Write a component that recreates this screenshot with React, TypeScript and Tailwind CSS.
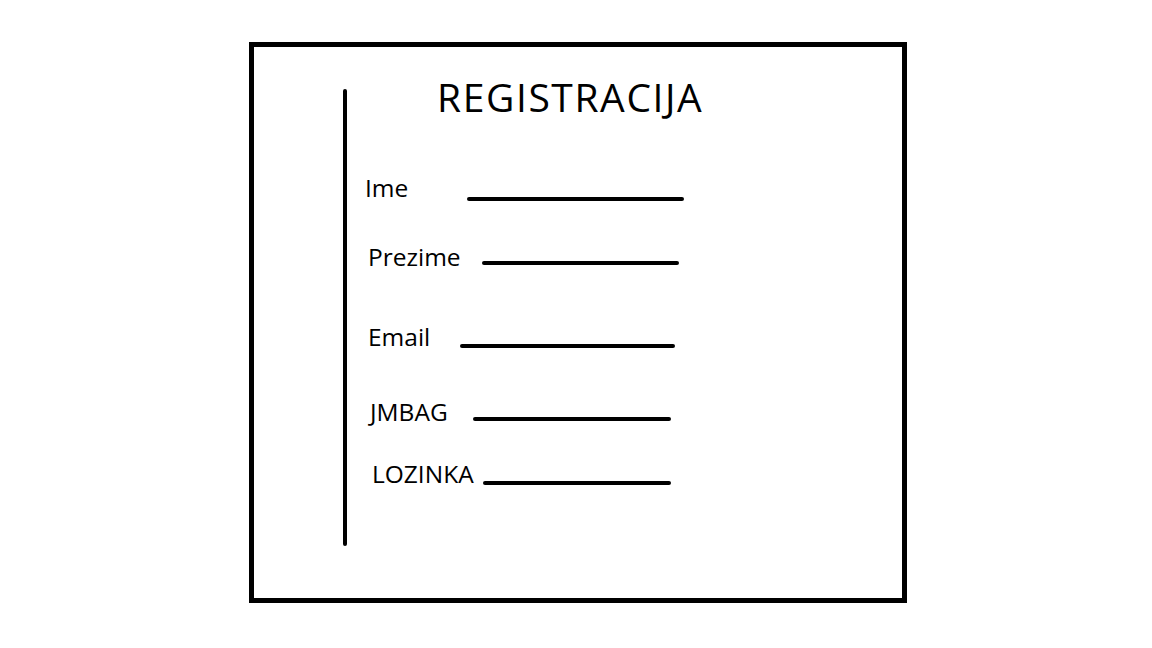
import React from 'react';

interface Field {
  label: string;
  // label box width, so the line starts where it was drawn
  labelWidth: string;
  rowClass: string;
  lineClass: string;
}

const fields: Field[] = [
  { label: 'Ime', labelWidth: 'w-[102px]', rowClass: 'mt-[60px] ml-0', lineClass: 'mt-[21px] w-[217px]' },
  { label: 'Prezime', labelWidth: 'w-[114px]', rowClass: 'mt-[44px] ml-[3px]', lineClass: 'mt-[16px] w-[197px]' },
  { label: 'Email', labelWidth: 'w-[92px]', rowClass: 'mt-[56px] ml-[3px]', lineClass: 'mt-[19px] w-[215px]' },
  { label: 'JMBAG', labelWidth: 'w-[103px]', rowClass: 'mt-[51px] ml-[5px]', lineClass: 'mt-[17px] w-[198px]' },
  { label: 'LOZINKA', labelWidth: 'w-[111px]', rowClass: 'mt-[38px] ml-[7px]', lineClass: 'mt-[19px] w-[188px]' },
];

export default function App() {
  return (
    <div className="w-[1152px] h-[648px] bg-white pl-[249px] pt-[42px] font-['Open_Sans',sans-serif] text-black">
      <div className="w-[658px] h-[561px] border-[5px] border-black pl-[89px] pt-[31px] flex">
        {/* left rule */}
        <div className="mt-[11px] w-1 h-[457px] bg-black rounded-full" />

        <div className="ml-[18px] flex flex-col">
          <h1 className="ml-[72px] text-[39px] h-[38px] leading-[38px] font-normal tracking-[1.6px]">REGISTRACIJA</h1>

          {fields.map((f) => (
            <div key={f.label} className={`flex items-start ${f.rowClass}`}>
              <span className={`${f.labelWidth} text-[24.5px] h-6 leading-6 shrink-0`}>{f.label}</span>
              <div className={`h-1 bg-black rounded-full ${f.lineClass}`} />
            </div>
          ))}
        </div>
      </div>
    </div>
  );
}
